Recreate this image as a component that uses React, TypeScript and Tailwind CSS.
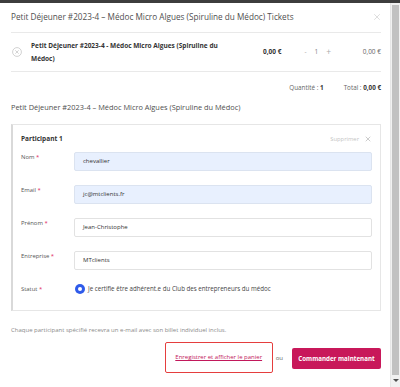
import { X } from 'lucide-react'

const fields = [
    { label: 'Nom', value: 'chevallier', filled: true },
    { label: 'Email', value: 'jc@mtclients.fr', filled: true },
    { label: 'Prénom', value: 'Jean-Christophe', filled: false },
    { label: 'Entreprise', value: 'MTclients', filled: false },
]

function CircleX() {
    return (
        <svg width="10" height="10" viewBox="0 0 12 12" fill="none" stroke="#c4c4c4" strokeWidth="0.9">
            <circle cx="6" cy="6" r="5.3" />
            <path d="M4 4l4 4M8 4l-4 4" />
        </svg>
    )
}

export default function App() {
    return (
        <div className="w-[400px] h-[387px] flex flex-col overflow-hidden bg-white" style={{ fontFamily: '"Open Sans", sans-serif' }}>
            <div className="h-[3px] bg-[#3d3d3d] shrink-0" />
            <div className="flex flex-1 min-h-0">
                <div className="flex-1 pl-[11px] pr-[9px] text-[#555]">
                    {/* header */}
                    <div className="h-[30px] flex items-center justify-between border-b border-[#e9e9e9]">
                        <h2 className="text-[8.2px] text-[#4f4f4f] whitespace-nowrap">Petit Déjeuner #2023-4 – Médoc Micro Algues (Spiruline du Médoc) Tickets</h2>
                        <X size={10} strokeWidth={1.2} className="text-[#bdbdbd] mr-[-1px] mb-[2px]" />
                    </div>

                    {/* ticket row */}
                    <div className="h-[39px] flex items-center border-b border-[#e9e9e9]">
                        <div className="w-[20px] pl-[1px] flex items-center"><CircleX /></div>
                        <div className="w-[212px] text-[6.5px] font-bold text-[#333] leading-[13px]">
                            Petit Déjeuner #2023-4 - Médoc Micro Algues (Spiruline du Médoc)
                        </div>
                        <div className="ml-[20px] text-[6.5px] font-bold text-[#333]">0,00 €</div>
                        <div className="ml-[23px] flex items-center gap-[8px] text-[6.5px] text-[#888]">
                            <span className="text-[#aaa]">-</span>
                            <span>1</span>
                            <span className="text-[#aaa] text-[8.5px]">+</span>
                        </div>
                        <div className="ml-auto text-[6.5px] text-[#666]">0,00 €</div>
                    </div>

                    <div className="h-[30px] flex items-center justify-end gap-[20px] text-[6.3px] text-[#666] pt-[1px]">
                        <span>Quantité : <b className="text-[#333]">1</b></span>
                        <span>Total : <b className="text-[#333]">0,00 €</b></span>
                    </div>

                    <div className="h-[12px] flex items-center text-[7.4px] text-[#4f4f4f] whitespace-nowrap">
                        Petit Déjeuner #2023-4 – Médoc Micro Algues (Spiruline du Médoc)
                    </div>

                    {/* participant card */}
                    <div className="mt-[10px] border border-[#e6e6e6] border-l-2 border-l-[#d9d9d9] pl-[8px] pr-[8px] pt-[6px] pb-[16px]">
                        <div className="h-[16px] flex items-center justify-between">
                            <span className="text-[6.5px] font-bold text-[#333]">Participant 1</span>
                            <span className="flex items-center gap-[5px] text-[5.8px] text-[#c4c4c4]">
                                Supprimer <X size={8} strokeWidth={1.8} className="text-[#aaa]" />
                            </span>
                        </div>
                        <div className="mt-[5px] flex flex-col gap-[14px]">
                            {fields.map(f => (
                                <div key={f.label} className="flex">
                                    <div className="w-[53px] text-[5.9px] leading-[10px] text-[#555]">
                                        {f.label} <span className="text-[#e0245e]">*</span>
                                    </div>
                                    <div className={`flex-1 h-[19px] rounded-[2px] border flex items-center pl-[8px] text-[6px] text-[#333] ${f.filled ? 'bg-[#e8f0fe] border-[#dbe3f0]' : 'bg-white border-[#e2e2e2]'}`}>
                                        {f.value}
                                    </div>
                                </div>
                            ))}
                            <div className="flex items-center h-[10px]">
                                <div className="w-[53px] text-[5.9px] text-[#555]">
                                    Statut <span className="text-[#e0245e]">*</span>
                                </div>
                                <span className="w-[10px] h-[10px] rounded-full bg-[#2f5bea] flex items-center justify-center ml-[1px]">
                                    <span className="w-[4px] h-[4px] rounded-full bg-white" />
                                </span>
                                <span className="ml-[3px] text-[6.2px] text-[#444]">Je certifie être adhérent.e du Club des entrepreneurs du médoc</span>
                            </div>
                        </div>
                    </div>

                    <p className="mt-[15px] h-[8px] leading-[8px] text-[6px] text-[#8a8a8a]">
                        Chaque participant spécifié recevra un e-mail avec son billet individuel inclus.
                    </p>

                    <div className="mt-[8px] flex items-center justify-end">
                        <div className="w-[108px] h-[31px] border-[1.5px] border-[#e53e3e] rounded-[2px] flex items-center justify-center">
                            <a href="#" className="text-[6px] text-[#c2185b] underline">Enregistrer et afficher le panier</a>
                        </div>
                        <span className="ml-[3px] mt-[1px] text-[6px] text-[#666]">ou</span>
                        <button className="ml-[9px] w-[89px] h-[21px] mt-[2px] rounded-[2px] bg-[#c8185a] text-white text-[6.2px] font-bold">
                            Commander maintenant
                        </button>
                    </div>
                </div>

                {/* scrollbar */}
                <div className="w-[10px] bg-[#f1f1f1] border-l border-[#e6e6e6] flex flex-col items-center pt-[2px] pb-[2px]">
                    <div className="w-[7px] flex-1 bg-[#c1c1c1]" />
                    <div className="h-[10px] flex items-center justify-center">
                        <div className="w-0 h-0 border-l-[3px] border-r-[3px] border-t-[3px] border-l-transparent border-r-transparent border-t-[#505050]" />
                    </div>
                </div>
            </div>
        </div>
    )
}
